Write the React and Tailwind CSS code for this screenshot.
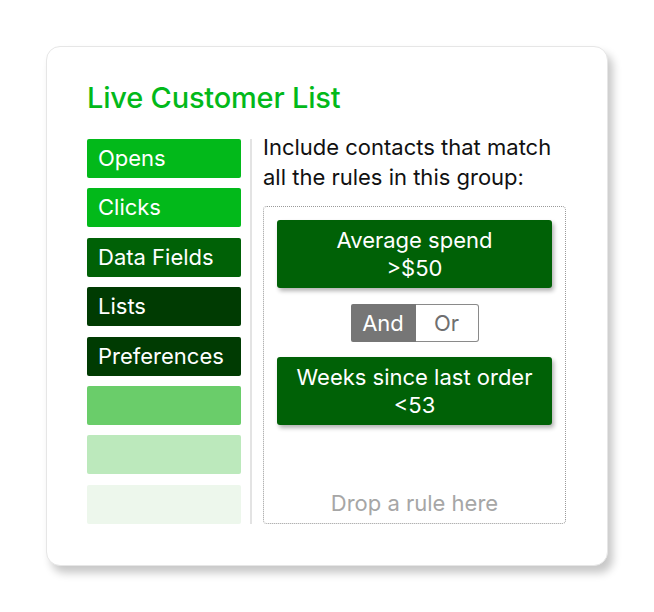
import React from 'react';

const fields = [
    { label: 'Opens', bg: 'bg-[#02b91a]' },
    { label: 'Clicks', bg: 'bg-[#02b91a]' },
    { label: 'Data Fields', bg: 'bg-[#006106]' },
    { label: 'Lists', bg: 'bg-[#003b02]' },
    { label: 'Preferences', bg: 'bg-[#003b02]' },
    { label: '', bg: 'bg-[#6acd6a]' },
    { label: '', bg: 'bg-[#bce9bc]' },
    { label: '', bg: 'bg-[#edf7ec]' },
];

const rules = [
    ['Average spend', '>$50'],
    ['Weeks since last order', '<53'],
];

function RuleCard({ lines }) {
    return (
        <div className="h-[68px] rounded-[3px] bg-[#006106] text-white text-[22px] leading-[28px] flex flex-col items-center justify-center shadow-[2px_3px_4px_rgba(0,0,0,0.3)]">
            {lines.map((l) => (
                <span key={l}>{l}</span>
            ))}
        </div>
    );
}

export default function App() {
    return (
        <div className="min-h-screen bg-white pt-[46px] pl-[46px]" style={{ fontFamily: 'Inter, "Noto Sans", sans-serif' }}>
            <div className="w-[562px] h-[520px] rounded-[14px] bg-white border border-[#e6e6e6] shadow-[5px_7px_8px_rgba(0,0,0,0.22)] pt-[34px] pl-[40px]">
                <h1 className="text-[29px] leading-[34px] font-medium text-[#02b91a] tracking-[-0.2px]">
                    Live Customer List
                </h1>

                <div className="flex mt-[24px]">
                    {/* draggable field types */}
                    <div className="w-[154px] flex flex-col gap-[10.4px]">
                        {fields.map((f, i) => (
                            <div
                                key={i}
                                className={`h-[39px] rounded-[2px] ${f.bg} text-white text-[22px] pl-[11px] flex items-center`}
                            >
                                {f.label}
                            </div>
                        ))}
                    </div>

                    <div className="w-[2px] bg-[#e3e3e3] ml-[9px]" />

                    {/* rule group */}
                    <div className="ml-[11px] flex flex-col -mt-[7px]">
                        <p className="text-[22px] leading-[30px] text-[#111]">
                            Include contacts that match
                            <br />
                            all the rules in this group:
                        </p>

                        <div className="mt-[14px] w-[303px] flex-1 border-[1.5px] border-dotted border-[#9a9a9a] rounded-[4px] px-[13px] pt-[13px] pb-[6px] flex flex-col">
                            <RuleCard lines={rules[0]} />

                            <div className="mt-[16px] mx-auto flex h-[38px] w-[128px] text-[22px]">
                                <div className="w-[65px] bg-[#767676] text-white flex items-center justify-center rounded-l-[2px]">
                                    And
                                </div>
                                <div className="flex-1 border border-[#8a8a8a] border-l-0 rounded-r-[3px] text-[#6f6f6f] flex items-center justify-center">
                                    Or
                                </div>
                            </div>

                            <div className="mt-[15px]">
                                <RuleCard lines={rules[1]} />
                            </div>

                            <div className="mt-auto text-center text-[22px] leading-[28px] text-[#a6a6a6]">
                                Drop a rule here
                            </div>
                        </div>
                    </div>
                </div>
            </div>
        </div>
    );
}
